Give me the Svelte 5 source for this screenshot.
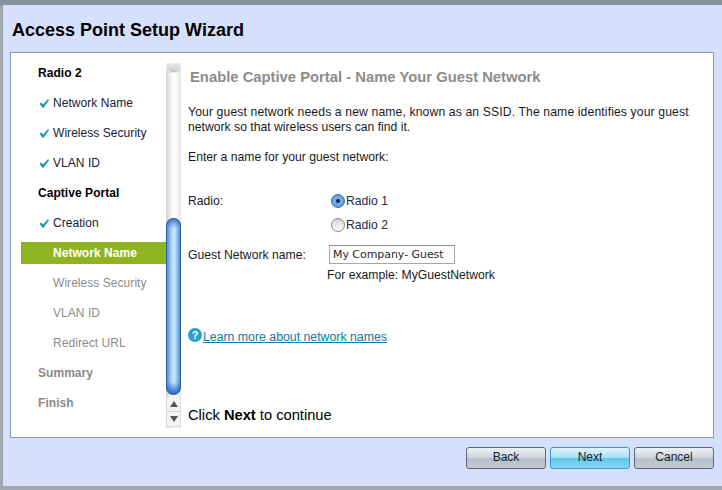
<script>
  const steps = [
    { label: "Radio 2", kind: "group" },
    { label: "Network Name", kind: "done" },
    { label: "Wireless Security", kind: "done" },
    { label: "VLAN ID", kind: "done" },
    { label: "Captive Portal", kind: "group" },
    { label: "Creation", kind: "done" },
    { label: "Network Name", kind: "active" },
    { label: "Wireless Security", kind: "todo" },
    { label: "VLAN ID", kind: "todo" },
    { label: "Redirect URL", kind: "todo" },
    { label: "Summary", kind: "later" },
    { label: "Finish", kind: "later" }
  ];
</script>

<div class="page">
  <div class="wizard">
    <h1>Access Point Setup Wizard</h1>
    <div class="box">
      <ul class="nav">
        {#each steps as step}
          <li class={step.kind}>
            {#if step.kind === "done"}
              <svg class="check" width="11" height="9" viewBox="0 0 11 10">
                <path d="M0 5.4 L1.7 4 L3.9 6.2 L9.2 0.4 L10.6 1.2 L4.4 9.6 L3.2 9.6 Z" fill="#1f8fbe" />
              </svg>
            {/if}
            {step.label}
          </li>
        {/each}
      </ul>
      <div class="scrollbar">
        <div class="track-top"></div>
        <div class="thumb"></div>
        <div class="track-rest"></div>
        <div class="arrows">
          <span class="up"></span>
          <span class="down"></span>
        </div>
      </div>
      <div class="content">
        <h2>Enable Captive Portal - Name Your Guest Network</h2>
        <p class="intro">
          <span class="first">Your guest network needs a new name, known as an SSID. The name identifies your guest</span><br />
          network so that wireless users can find it.
        </p>
        <p class="prompt">Enter a name for your guest network:</p>
        <div class="radio-row">
          <span class="label">Radio:</span>
          <div class="radios">
            <div class="radio-item"><span class="radio on"></span>Radio 1</div>
            <div class="radio-item"><span class="radio"></span>Radio 2</div>
          </div>
        </div>
        <div class="name-row">
          <span class="label">Guest Network name:</span>
          <div class="field">My Company- Guest</div>
        </div>
        <div class="example">For example: MyGuestNetwork</div>
        <div class="learn">
          <span class="help">?</span><a href="#learn">Learn more about network names</a>
        </div>
        <div class="spacer"></div>
        <div class="continue">Click <b>Next</b> to continue</div>
      </div>
    </div>
    <div class="buttons">
      <button>Back</button>
      <button class="primary">Next</button>
      <button>Cancel</button>
    </div>
  </div>
</div>

<style>
  :global(body) {
    margin: 0;
    background: #a3a9ad;
  }
  .page {
    width: 722px;
    height: 490px;
    box-sizing: border-box;
    padding: 5px 0 4px 2px;
    background: linear-gradient(#86939f 0, #86939f 6px, #a3a9ad 6px);
    font-family: "Liberation Sans", Arial, sans-serif;
    color: #000;
    overflow: hidden;
  }
  .wizard {
    height: 481px;
    background: #d6dffc;
    border-left: 1px solid #9aa3b5;
    padding: 0 8px 0 7px;
    display: flex;
    flex-direction: column;
  }
  h1 {
    margin: 0;
    height: 47px;
    line-height: 50px;
    padding-left: 2px;
    font-size: 18px;
    font-weight: bold;
  }
  .box {
    height: 386px;
    box-sizing: border-box;
    background: #fff;
    border: 1px solid #8d9aa6;
    display: flex;
  }
  .nav {
    list-style: none;
    margin: 5px 0 0;
    padding: 0;
    width: 155px;
    flex: none;
    font-size: 12px;
    letter-spacing: 0.05px;
  }
  .nav li {
    height: 30px;
    line-height: 30px;
    margin-left: 10px;
    padding-left: 32px;
    position: relative;
    color: #14213a;
  }
  .nav li.group,
  .nav li.later {
    padding-left: 17px;
    font-weight: bold;
  }
  .nav li.group {
    color: #000;
  }
  .nav li.later {
    color: #8a8a8a;
  }
  .nav li.todo {
    color: #8a8a8a;
  }
  .nav li.active {
    height: 22px;
    line-height: 22px;
    margin-top: 4px;
    margin-bottom: 4px;
    background: #8fb421;
    color: #fff;
    font-weight: bold;
  }
  .check {
    position: absolute;
    left: 18px;
    top: 11px;
  }
  .scrollbar {
    width: 15px;
    flex: none;
    margin: 10px 0 9px;
    display: flex;
    flex-direction: column;
    background: linear-gradient(90deg, #d2d2d2, #f4f4f4 35%, #fff 60%, #e4e4e4);
  }
  .track-top {
    height: 10px;
    background: linear-gradient(#eaeaea, #d8d8d8 60%, #bdbdbd);
    border-bottom-left-radius: 7px 4px;
    border-bottom-right-radius: 7px 4px;
    box-shadow: inset 0 0 0 1px #ececec;
    margin-bottom: 145px;
  }
  .thumb {
    height: 177px;
    box-sizing: border-box;
    border: 1px solid #2a62ab;
    border-radius: 7px;
    background:
      linear-gradient(rgba(30, 90, 190, 0.75), transparent 9px, transparent calc(100% - 12px), rgba(20, 85, 190, 0.9)),
      linear-gradient(90deg, #4f8fd9, #a9d3f6 35%, #cfe8fb 55%, #7db5ea 85%, #4a86cf);
  }
  .track-rest {
    height: 2px;
  }
  .arrows {
    height: 30px;
    box-sizing: border-box;
    background: #f2f2f2;
    border: solid #dcdcdc;
    border-width: 0 1px 1px;
    display: flex;
    flex-direction: column;
  }
  .arrows span {
    flex: 1;
    display: flex;
    align-items: center;
    justify-content: center;
  }
  .arrows span::after {
    content: "";
    border-left: 4px solid transparent;
    border-right: 4px solid transparent;
  }
  .up {
    border-bottom: 1px solid #d0d0d0;
  }
  .up::after {
    border-bottom: 6px solid #555;
  }
  .down::after {
    border-top: 6px solid #555;
  }
  .content {
    flex: 1;
    padding: 15px 0 0 7px;
    display: flex;
    flex-direction: column;
    font-size: 12.2px;
    color: #1a1a1a;
    min-width: 0;
  }
  h2 {
    margin: 0 0 0 2px;
    font-size: 14.8px;
    line-height: 18px;
    font-weight: bold;
    color: #8c8c8c;
  }
  .intro {
    margin: 19px 0 0;
    line-height: 15px;
    white-space: nowrap;
  }
  .first {
    letter-spacing: 0.12px;
  }
  .prompt {
    margin: 15px 0 0;
    line-height: 15px;
  }
  .radio-row {
    display: flex;
    margin-top: 28px;
  }
  .label {
    display: block;
  }
  .radio-row .label {
    width: 143px;
    line-height: 16px;
  }
  .radios {
    display: flex;
    flex-direction: column;
    gap: 8px;
  }
  .radio-item {
    display: flex;
    align-items: center;
    height: 16px;
    color: #1a2a4a;
  }
  .radio {
    width: 14px;
    height: 14px;
    box-sizing: border-box;
    border-radius: 50%;
    border: 1px solid #8a8a8a;
    background: linear-gradient(#d4d4d4, #fdfdfd);
    margin-right: 1px;
    display: flex;
    align-items: center;
    justify-content: center;
  }
  .radio.on {
    border-color: #3a6ea8;
    background: radial-gradient(circle, #8cbcef, #4e8fd8);
  }
  .radio.on::after {
    content: "";
    width: 4px;
    height: 4px;
    border-radius: 50%;
    background: #10253f;
  }
  .name-row {
    display: flex;
    align-items: center;
    margin-top: 12px;
  }
  .name-row .label {
    width: 141px;
  }
  .field {
    width: 126px;
    height: 19px;
    line-height: 18px;
    box-sizing: border-box;
    border: 1px solid #a8a8a8;
    border-top-color: #8e8e8e;
    padding-left: 3px;
    font-family: "DejaVu Sans", sans-serif;
    font-size: 11px;
    letter-spacing: -0.05px;
    color: #2a2a2a;
  }
  .example {
    margin: 4px 0 0 139px;
    line-height: 15px;
  }
  .learn {
    display: flex;
    align-items: center;
    margin-top: 46px;
    height: 16px;
    font-size: 12.3px;
  }
  .help {
    width: 14px;
    height: 14px;
    border-radius: 50%;
    background: #2a9fd0;
    color: #fff;
    font-size: 11px;
    font-weight: bold;
    line-height: 14px;
    text-align: center;
    margin: -4px 1px 0 0;
  }
  .learn a {
    color: #0a78b8;
    text-decoration: underline;
  }
  .spacer {
    flex: 1;
  }
  .continue {
    font-size: 14.7px;
    line-height: 16px;
    margin-bottom: 14px;
    color: #000;
  }
  .buttons {
    display: flex;
    justify-content: flex-end;
    gap: 4px;
    margin-top: 9px;
  }
  button {
    width: 80px;
    height: 22px;
    padding: 0 0 2px;
    box-sizing: border-box;
    border: 1px solid #5e6870;
    border-radius: 3px;
    background: linear-gradient(#eef1f3, #cdd6dc 50%, #b4c1c9 52%, #c2ccd3);
    font-family: "Liberation Sans", Arial, sans-serif;
    font-size: 12px;
    color: #10202c;
  }
  button.primary {
    border-color: #2b9ed0;
    background: linear-gradient(#dff4fb, #a5e0f4 50%, #5cc6ea 52%, #8ed8f0);
  }
</style>
